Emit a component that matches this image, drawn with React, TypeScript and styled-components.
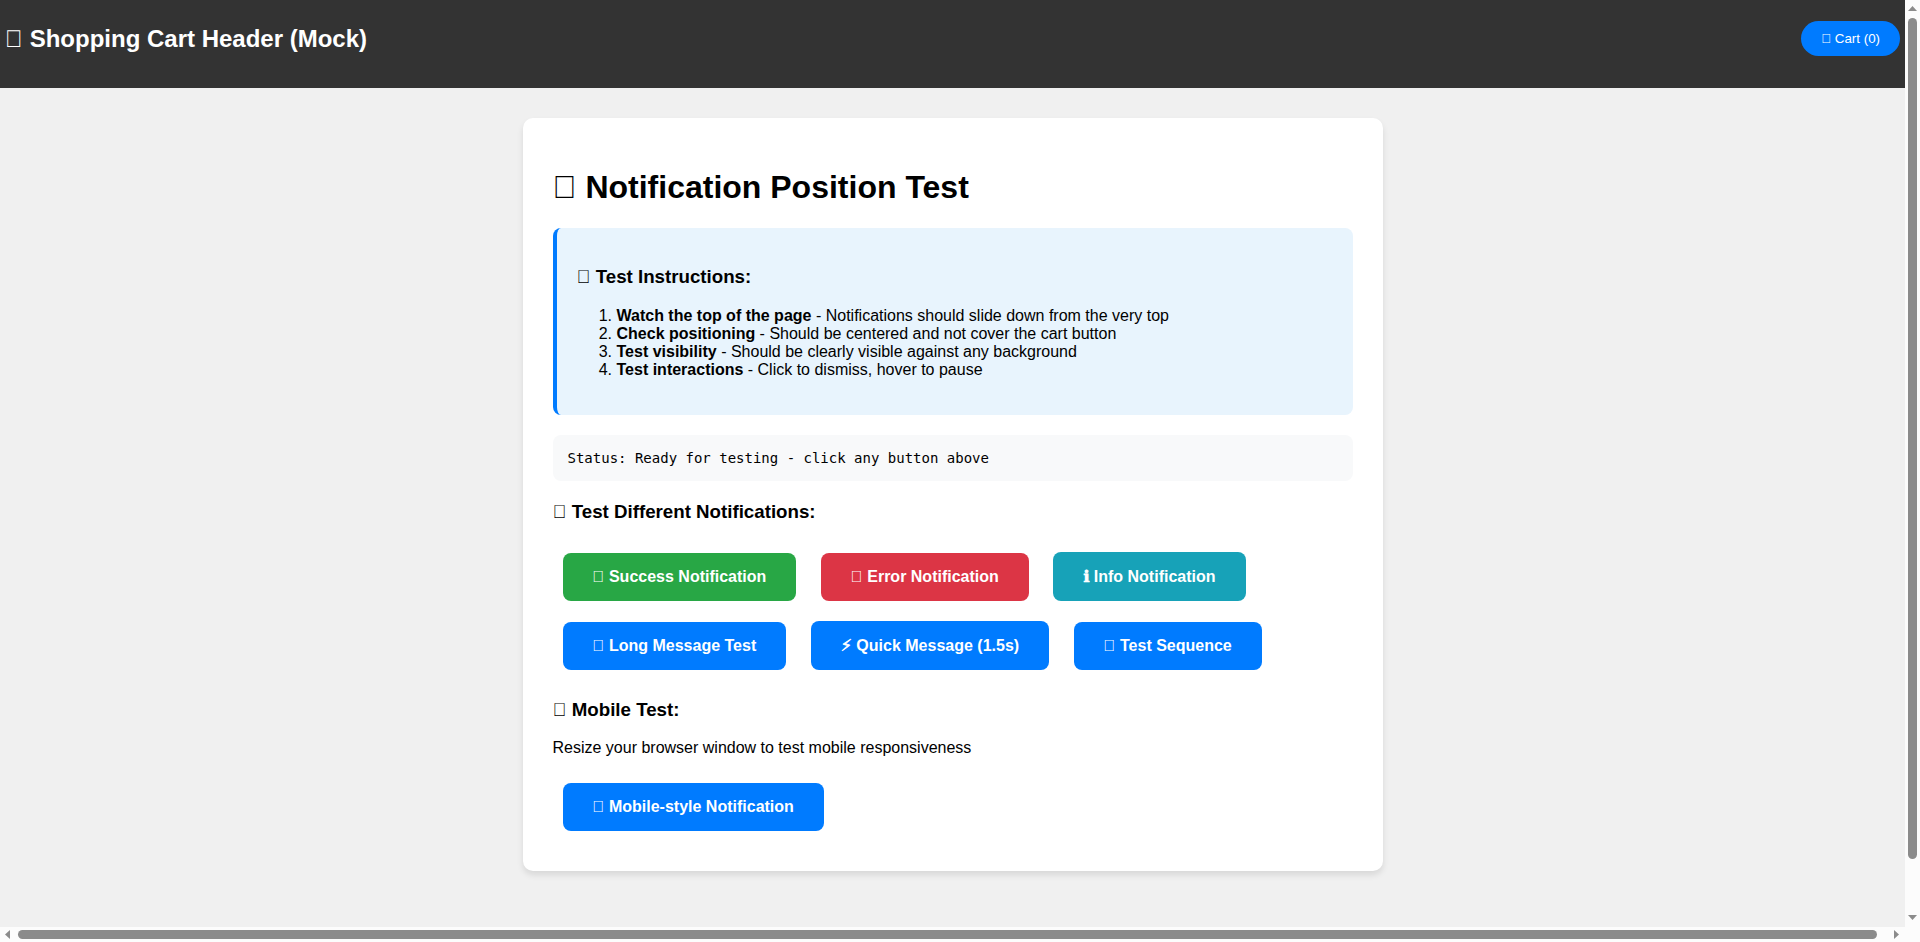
import React from "react";
import styled, { createGlobalStyle, css } from "styled-components";

const sans = `"Liberation Sans", Arial, sans-serif`;

const GlobalStyle = createGlobalStyle`
  html, body { margin: 0; padding: 0; overflow: hidden; }
  body { font-family: ${sans}; font-size: 16px; color: #000; }
`;

const Window = styled.div`
  display: grid;
  grid-template-columns: minmax(0, 1fr) 15px;
  grid-template-rows: minmax(0, 1fr) 15px;
  width: 100vw;
  height: 100vh;
  background: #fcfcfc;
`;

const Viewport = styled.div`
  overflow: hidden;
  background: #f0f0f0;
`;

const Header = styled.header`
  display: flex;
  justify-content: space-between;
  align-items: center;
  box-sizing: border-box;
  height: 87.84px;
  padding: 0 5px 10.84px;
  background: #333;
  color: #fff;
`;

const HeaderTitle = styled.h2`
  margin: 0;
  font-size: 24px;
`;

const CartButton = styled.button`
  padding: 10px 20px;
  border: none;
  border-radius: 25px;
  background: #007bff;
  color: #fff;
  font-family: ${sans};
  font-size: 13.3333px;
  cursor: pointer;
`;

const Card = styled.main`
  max-width: 800px;
  margin: 30px auto;
  padding: 30px;
  border-radius: 10px;
  background: #fff;
  box-shadow: 0 4px 6px rgba(0, 0, 0, 0.1);
  display: flow-root;
`;

const Instructions = styled.section`
  margin: 20px 0;
  padding: 20px;
  border-left: 4px solid #007bff;
  border-radius: 8px;
  background: #e8f4fd;
`;

const Status = styled.div`
  margin: 20px 0;
  padding: 15px;
  border-radius: 8px;
  background: #f8f9fa;
  font-family: "DejaVu Sans Mono", monospace;
  font-size: 14px;
`;

const tones = {
  primary: "#007bff",
  success: "#28a745",
  error: "#dc3545",
  info: "#17a2b8",
};

const TestButton = styled.button<{ $tone?: keyof typeof tones }>`
  margin: 10px;
  padding: 15px 30px;
  border: none;
  border-radius: 8px;
  background: ${({ $tone = "primary" }) => tones[$tone]};
  color: #fff;
  font-family: ${sans};
  font-size: 16px;
  font-weight: bold;
  cursor: pointer;
`;

const Scrollbar = styled.div<{ $vertical?: boolean }>`
  display: flex;
  align-items: center;
  justify-content: space-between;
  ${({ $vertical }) =>
    $vertical
      ? css`
          flex-direction: column;
          padding: 6px 0 7px;
        `
      : css`
          padding: 0 6px 0 5px;
        `}
`;

const Thumb = styled.div<{ $vertical?: boolean }>`
  border-radius: 5px;
  background: #8b8b8b;
  ${({ $vertical }) =>
    $vertical
      ? css`
          width: 9px;
          height: 841px;
          margin: 7px 0 auto;
        `
      : css`
          height: 9px;
          width: 1859px;
          margin: 0 auto 0 8px;
        `}
`;

const ArrowIcon = styled.svg`
  display: block;
  flex: none;
  fill: #8b8b8b;
`;

const SymbolText = styled.span`
  font-family: "Liberation Sans", "DejaVu Sans", sans-serif;
  -webkit-text-stroke: 0.7px currentColor;
`;

const arrows = {
  up: { w: 9, h: 5, d: "M0 5L4.5 0L9 5Z" },
  down: { w: 9, h: 5, d: "M0 0H9L4.5 5Z" },
  left: { w: 5, h: 9, d: "M5 0V9L0 4.5Z" },
  right: { w: 5, h: 9, d: "M0 0V9L5 4.5Z" },
};

const Arrow = ({ dir }: { dir: keyof typeof arrows }) => {
  const { w, h, d } = arrows[dir];
  return (
    <ArrowIcon width={w} height={h} viewBox={`0 0 ${w} ${h}`}>
      <path d={d} />
    </ArrowIcon>
  );
};

// Private-use character, drawn as the font's empty box.
const BOX = "\u{F0000}";

const steps = [
  ["Watch the top of the page", "Notifications should slide down from the very top"],
  ["Check positioning", "Should be centered and not cover the cart button"],
  ["Test visibility", "Should be clearly visible against any background"],
  ["Test interactions", "Click to dismiss, hover to pause"],
];

export default function App() {
  return (
    <Window>
      <GlobalStyle />
      <Viewport>
        <Header>
          <HeaderTitle>{BOX} Shopping Cart Header (Mock)</HeaderTitle>
          <CartButton>{BOX} Cart (0)</CartButton>
        </Header>
        <Card>
          <h1>{BOX} Notification Position Test</h1>
          <Instructions>
            <h3>{BOX} Test Instructions:</h3>
            <ol>
              {steps.map(([name, detail]) => (
                <li key={name}>
                  <strong>{name}</strong> - {detail}
                </li>
              ))}
            </ol>
          </Instructions>
          <Status>Status: Ready for testing - click any button above</Status>
          <h3>{BOX} Test Different Notifications:</h3>
          <TestButton $tone="success">{BOX} Success Notification</TestButton>{" "}
          <TestButton $tone="error">{BOX} Error Notification</TestButton>{" "}
          <TestButton $tone="info">
            <SymbolText>{"\u2139"}</SymbolText> Info Notification
          </TestButton>{" "}
          <TestButton>{BOX} Long Message Test</TestButton>{" "}
          <TestButton>
            <SymbolText>{"\u26A1\uFE0E"}</SymbolText> Quick Message (1.5s)
          </TestButton>{" "}
          <TestButton>{BOX} Test Sequence</TestButton>
          <h3>{BOX} Mobile Test:</h3>
          <p>Resize your browser window to test mobile responsiveness</p>
          <TestButton>{BOX} Mobile-style Notification</TestButton>
        </Card>
      </Viewport>
      <Scrollbar $vertical>
        <Arrow dir="up" />
        <Thumb $vertical />
        <Arrow dir="down" />
      </Scrollbar>
      <Scrollbar>
        <Arrow dir="left" />
        <Thumb />
        <Arrow dir="right" />
      </Scrollbar>
    </Window>
  );
}
